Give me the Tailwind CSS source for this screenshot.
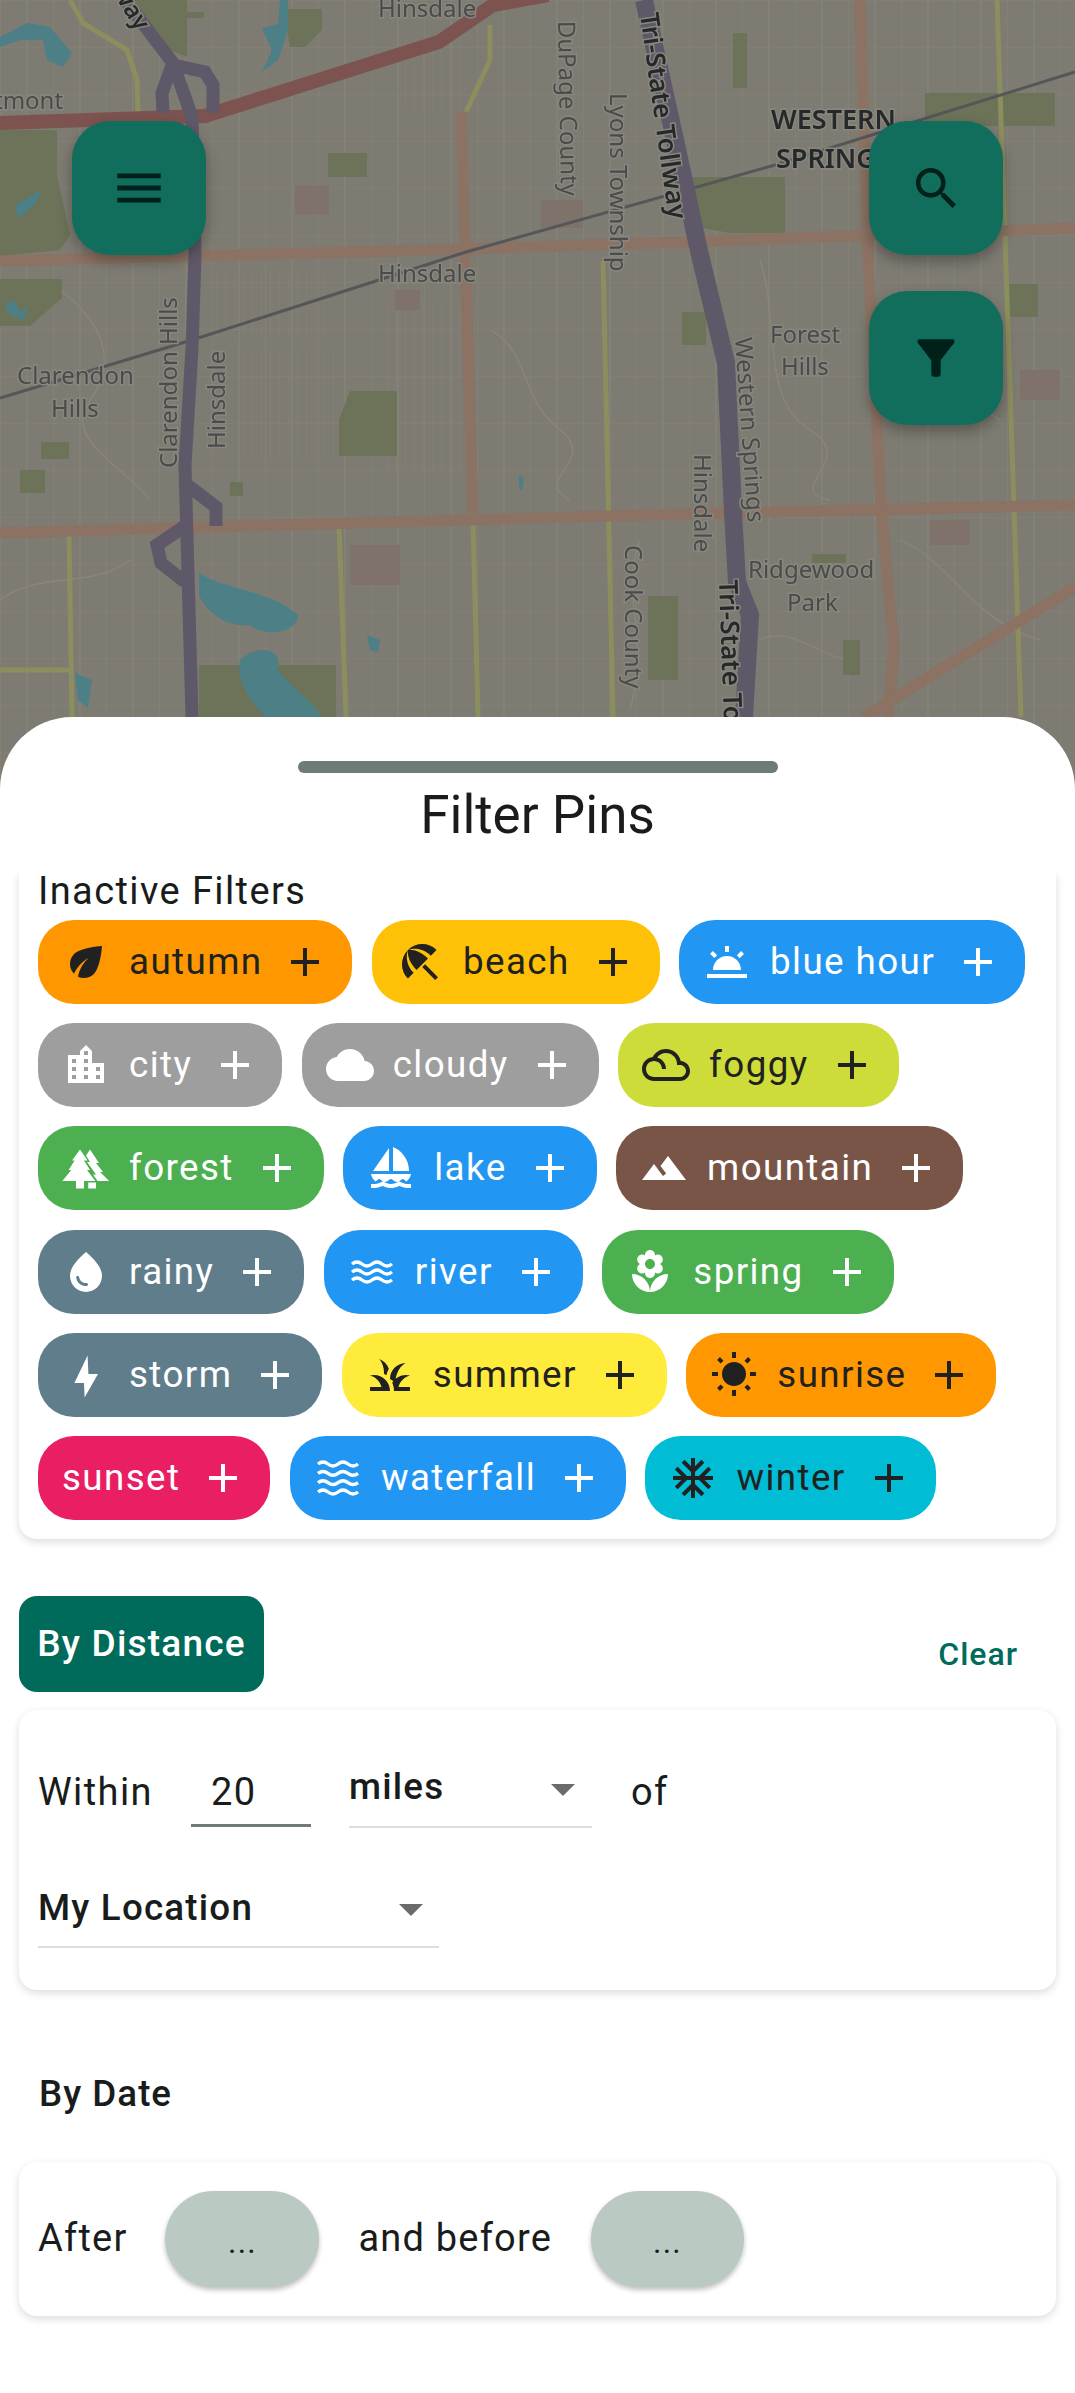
<!DOCTYPE html>
<html lang="en">
<head>
    <meta charset="UTF-8">
    <meta name="viewport" content="width=device-width, initial-scale=1.0">
    <title>Filter Pins</title>
    <script src="https://cdn.jsdelivr.net/npm/@tailwindcss/browser@4"></script>
</head>
<body class="bg-white">
<div class="relative w-[1075px] h-[2393px] overflow-hidden bg-white font-[Roboto,sans-serif] text-[#191c1b]">

    <!-- Map behind the scrim -->
    <div class="absolute inset-x-0 top-0 h-[800px] bg-[#7e7b72]">
        <svg class="blur-[0.7px]" width="1075" height="800" viewBox="0 0 1075 800" xmlns="http://www.w3.org/2000/svg">
            <defs>
                <pattern id="streets" width="53" height="47" patternUnits="userSpaceOnUse">
                    <path d="M0 0V47M0 0H53M27 0V47" stroke="#878477" stroke-width="1.2" fill="none"/>
                </pattern>
                <pattern id="blocks" width="9" height="60" patternUnits="userSpaceOnUse">
                    <path d="M0 0V60" stroke="#878477" stroke-width="1" fill="none"/>
                </pattern>
            </defs>
            <rect width="1075" height="800" fill="url(#streets)"/>
            <path d="M210 270H330V340H210zM240 350H340V460H240zM380 300H460V470H380zM400 40H460V110H400z" fill="url(#blocks)"/>
            <g fill="none" stroke="#8a8778" stroke-width="1.3">
                <path d="M60 290C100 320 120 360 90 400S130 470 150 500M490 330C530 350 520 400 560 430S530 480 570 500"/>
                <path d="M760 260C780 320 760 400 810 430S780 490 830 500M900 540C950 560 970 620 1040 640M640 540C620 590 650 640 630 710"/>
                <path d="M0 600C40 570 90 590 130 560M760 640C800 620 840 680 860 650M900 300C960 320 960 400 1000 420"/>
            </g>
            <!-- parks -->
            <g fill="#6c7358">
                <path d="M130 0H187V12H204V18H187V57L170 50 145 30z"/>
                <path d="M0 130H57V175L70 235 60 250 0 256z"/>
                <path d="M0 279H62V298L30 326H0z"/>
                <path d="M284 9H322V30L305 47H290z"/>
                <path d="M328 153H367V177H328zM692 177H785V233H730L692 226z"/>
                <path d="M925 93H1055V126H925zM1007 284H1038V317H1007zM682 312H706V345H682z"/>
                <path d="M41 442H69V459H41zM20 470H45V493H20zM230 482H243V496H230zM733 33H747V88H733z"/>
                <path d="M350 391H397V456H339V420z"/>
                <path d="M199 665H336V717H199z"/>
                <path d="M648 596H678V680H648zM843 640H860V675H843zM812 554H846V563H812z"/>
            </g>
            <!-- built up patches -->
            <g fill="#7e726a">
                <path d="M295 186H329V214H295zM541 200H583V228H541zM395 290H420V310H395zM350 545H400V585H350z"/>
                <path d="M930 520H970V545H930zM1020 370H1060V400H1020z"/>
            </g>
            <!-- water -->
            <g fill="#4c7f86">
                <path d="M0 37L27 23 50 27 72 53 63 67 47 60 43 40 20 40 0 47z"/>
                <path d="M262 28L278 24 280 0H288V30L278 60 262 72 272 50z"/>
                <path d="M15 205L42 190 35 205 18 218z"/>
                <path d="M5 305L14 300 20 312 28 305 24 320 10 315z"/>
                <path d="M199 573C225 590 270 590 298 615 298 630 270 640 250 625 225 628 205 610 199 595z"/>
                <path d="M240 660C260 642 285 650 277 670 295 690 312 700 322 717H265C250 700 235 680 240 660z"/>
                <path d="M75 673L92 680 88 708 78 700zM367 635L380 640 378 652 370 650zM519 475L524 478 522 491 519 488z"/>
            </g>
            <!-- minor roads, olive -->
            <g fill="none" stroke="#8c8e5e" stroke-width="5">
                <path d="M70 0L83 23 127 50 137 80 138 113"/>
                <path d="M490 25V60L466 112"/>
                <path d="M603 261L613 717M473 521L478 717M69 535L72 717M339 526L346 717"/>
                <path d="M997 0L1021 717M0 670H72"/>
            </g>
            <!-- arterial roads, tan -->
            <g fill="none" stroke="#8b7262" stroke-width="11">
                <path d="M0 261L466 249 685 242 1075 228"/>
                <path d="M0 533L240 526 685 514 1075 505"/>
                <path d="M461 112L473 517"/>
                <path d="M860 0L867 233 881 507 894 647 888 717"/>
                <path d="M1075 587L864 717"/>
            </g>
            <!-- rail -->
            <path d="M0 398L192 340 466 252 775 165 1075 72" fill="none" stroke="#55555a" stroke-width="3"/>
            <!-- red road -->
            <path d="M0 123L205 116 439 42 493 5 548 -5" fill="none" stroke="#7d5350" stroke-width="14"/>
            <!-- highways -->
            <g fill="none" stroke="#5f5869" stroke-width="13">
                <path d="M125 0L173 63 192 117 195 256 192 349 185 465 188 573 192 717"/>
                <path d="M173 63L162 93 163 113M178 66L205 72 213 85 213 113"/>
                <path d="M186 484L216 507V526M185 526L157 545 161 563 185 582"/>
            </g>
            <path d="M644 0L675 140 699 251 726 363 733 512 737 582 750 615 744 717" fill="none" stroke="#5f5869" stroke-width="18"/>
            <!-- labels -->
            <g font-family="Noto Sans" font-size="24" fill="#4a4b4a" stroke="#88877f" stroke-width="3" paint-order="stroke">
                <text x="378" y="17">Hinsdale</text>
                <text x="-6" y="109">tmont</text>
                <text x="378" y="282">Hinsdale</text>
                <text x="770" y="343">Forest</text>
                <text x="781" y="375">Hills</text>
                <text x="17" y="384">Clarendon</text>
                <text x="51" y="417">Hills</text>
                <text x="748" y="578">Ridgewood</text>
                <text x="787" y="611">Park</text>
                <text transform="translate(558 21) rotate(89)">DuPage County</text>
                <text transform="translate(610 93) rotate(90)">Lyons Township</text>
                <text transform="translate(177 468) rotate(-90)">Clarendon Hills</text>
                <text transform="translate(225 449) rotate(-90)">Hinsdale</text>
                <text transform="translate(735 338) rotate(86)">Western Springs</text>
                <text transform="translate(694 454) rotate(90)">Hinsdale</text>
                <text transform="translate(625 545) rotate(90)">Cook County</text>
            </g>
            <g font-family="Noto Sans" font-weight="600" fill="#26282a" stroke="#88877f" stroke-width="3" paint-order="stroke">
                <text x="771" y="129" font-size="27">WESTERN</text>
                <text x="776" y="168" font-size="27">SPRINGS</text>
                <text transform="translate(640 14) rotate(82)" font-size="26">Tri-State Tollway</text>
                <text transform="translate(719 580) rotate(88)" font-size="26">Tri-State Tollway</text>
                <text transform="translate(112 -8) rotate(58)" font-size="24">way</text>
            </g>
        </svg>

        <!-- Map action buttons -->
        <button class="absolute left-[72px] top-[121px] flex size-[134px] items-center justify-center rounded-[38px] bg-[#116e5c] text-[#00201a] shadow-[0_6px_14px_rgba(0,0,0,0.3)]">
            <svg class="size-[58px] fill-current" viewBox="0 0 24 24"><path d="M3 18h18v-2H3v2zm0-5h18v-2H3v2zm0-7v2h18V6H3z"/></svg>
        </button>
        <button class="absolute left-[869px] top-[121px] flex size-[134px] items-center justify-center rounded-[38px] bg-[#116e5c] text-[#00201a] shadow-[0_6px_14px_rgba(0,0,0,0.3)]">
            <svg class="size-[55px] fill-current" viewBox="0 0 24 24"><path d="M15.5 14h-.79l-.28-.27C15.41 12.59 16 11.11 16 9.5 16 5.91 13.09 3 9.5 3S3 5.91 3 9.5 5.91 16 9.5 16c1.61 0 3.09-.59 4.23-1.57l.27.28v.79l5 4.99L20.49 19l-4.99-5zm-6 0C7.01 14 5 11.99 5 9.5S7.01 5 9.5 5 14 7.01 14 9.5 11.99 14 9.5 14z"/></svg>
        </button>
        <button class="absolute left-[869px] top-[291px] flex size-[134px] items-center justify-center rounded-[38px] bg-[#116e5c] text-[#00201a] shadow-[0_6px_14px_rgba(0,0,0,0.3)]">
            <svg class="size-[56px] fill-current" viewBox="0 0 24 24"><path d="M4.25 5.61C6.27 8.2 10 13 10 13v6c0 .55.45 1 1 1h2c.55 0 1-.45 1-1v-6s3.72-4.8 5.74-7.39c.51-.66.04-1.61-.79-1.61H5.04c-.83 0-1.3.95-.79 1.61z"/></svg>
        </button>
    </div>

    <!-- Bottom sheet -->
    <div class="relative mt-[717px] h-[1676px] rounded-t-[72px] bg-white">
        <div class="flex flex-col items-center pt-[44px]">
            <div class="h-[12px] w-[480px] rounded-full bg-[#6f7b75]"></div>
            <h2 class="mt-[14px] h-[86px] text-[53px] leading-[56px] font-normal">Filter Pins</h2>
        </div>

        <!-- Scrolling list, top card is cut off by the header -->
        <div class="overflow-hidden px-[19px] h-[1520px]">
            <div class="rounded-b-[18px] bg-white px-[19px] pb-[19px] shadow-[0_3px_8px_rgba(0,0,0,0.14)]">
                <p class="h-[47px] text-[38px] leading-[36px] tracking-[1.4px]">Inactive Filters</p>
                <div class="flex flex-wrap gap-x-[19.5px] gap-y-[19.2px] text-[36.75px] tracking-[1.4px] leading-[44px]">
                    <div class="flex h-[84px] items-center gap-[19px] rounded-[36px] pl-[24px] pr-[23px] bg-[#ff9800] text-[#212121]">
                        <svg class="size-[48px] fill-current" viewBox="0 0 24 24"><path d="M6.05 8.05c-2.73 2.73-2.73 7.15-.02 9.88 1.47-3.4 4.09-6.24 7.36-7.93-2.77 2.34-4.71 5.61-5.39 9.32 2.6 1.23 5.8.78 7.95-1.37C19.43 14.47 20 4 20 4S9.53 4.57 6.05 8.05z"/></svg>
                        <span>autumn</span>
                        <svg class="size-[48px] fill-current" viewBox="0 0 24 24"><path d="M19 13h-6v6h-2v-6H5v-2h6V5h2v6h6v2z"/></svg>
                    </div>
                    <div class="flex h-[84px] items-center gap-[19px] rounded-[36px] pl-[24px] pr-[23px] bg-[#ffc107] text-[#212121]">
                        <svg class="size-[48px] fill-current" viewBox="0 0 24 24"><path d="M13.127 14.56l1.43-1.43 6.44 6.443L19.57 21zm4.293-5.73l2.86-2.86c-3.95-3.95-10.35-3.96-14.3-.02 3.93-1.3 8.31-.25 11.44 2.88zM5.95 5.98c-3.94 3.95-3.93 10.35.02 14.3l2.86-2.86C5.7 14.29 4.65 9.91 5.95 5.98zm.02-.02l-.01.01c-.38 3.01 1.17 6.88 4.3 10.02l5.73-5.73c-3.13-3.13-7.01-4.68-10.02-4.3z"/></svg>
                        <span>beach</span>
                        <svg class="size-[48px] fill-current" viewBox="0 0 24 24"><path d="M19 13h-6v6h-2v-6H5v-2h6V5h2v6h6v2z"/></svg>
                    </div>
                    <div class="flex h-[84px] items-center gap-[19px] rounded-[36px] pl-[24px] pr-[23px] bg-[#2196f3] text-white">
                        <svg class="size-[48px] fill-current" viewBox="0 0 24 24"><path d="M16.955 8.662l2.12-2.122 1.416 1.414-2.121 2.122zM2 18h20v2H2zm9-14h2v3h-2zM3.543 7.925L4.957 6.51l2.121 2.12-1.414 1.415zM5 16h14c0-3.87-3.13-7-7-7s-7 3.13-7 7z"/></svg>
                        <span>blue hour</span>
                        <svg class="size-[48px] fill-current" viewBox="0 0 24 24"><path d="M19 13h-6v6h-2v-6H5v-2h6V5h2v6h6v2z"/></svg>
                    </div>
                    <div class="flex h-[84px] items-center gap-[19px] rounded-[36px] pl-[24px] pr-[23px] bg-[#9e9e9e] text-white">
                        <svg class="size-[48px] fill-current" viewBox="0 0 24 24"><path d="M15 11V5l-3-3-3 3v2H3v14h18V11h-6zm-8 8H5v-2h2v2zm0-4H5v-2h2v2zm0-4H5V9h2v2zm6 8h-2v-2h2v2zm0-4h-2v-2h2v2zm0-4h-2V9h2v2zm0-4h-2V5h2v2zm6 12h-2v-2h2v2zm0-4h-2v-2h2v2z"/></svg>
                        <span>city</span>
                        <svg class="size-[48px] fill-current" viewBox="0 0 24 24"><path d="M19 13h-6v6h-2v-6H5v-2h6V5h2v6h6v2z"/></svg>
                    </div>
                    <div class="flex h-[84px] items-center gap-[19px] rounded-[36px] pl-[24px] pr-[23px] bg-[#9e9e9e] text-white">
                        <svg class="size-[48px] fill-current" viewBox="0 0 24 24"><path d="M19.35 10.04C18.67 6.59 15.64 4 12 4 9.11 4 6.6 5.64 5.35 8.04 2.34 8.36 0 10.91 0 14c0 3.31 2.69 6 6 6h13c2.76 0 5-2.24 5-5 0-2.64-2.05-4.78-4.65-4.96z"/></svg>
                        <span>cloudy</span>
                        <svg class="size-[48px] fill-current" viewBox="0 0 24 24"><path d="M19 13h-6v6h-2v-6H5v-2h6V5h2v6h6v2z"/></svg>
                    </div>
                    <div class="flex h-[84px] items-center gap-[19px] rounded-[36px] pl-[24px] pr-[23px] bg-[#cddc39] text-[#212121]">
                        <svg class="size-[48px] fill-current" viewBox="0 0 24 24"><path d="M19.35 10.04C18.67 6.59 15.64 4 12 4c-2.89 0-5.4 1.64-6.65 4.04C2.34 8.36 0 10.9 0 14c0 3.31 2.69 6 6 6h13c2.76 0 5-2.24 5-5 0-2.64-2.05-4.78-4.65-4.96zM19 18H6c-2.21 0-4-1.79-4-4s1.79-4 4-4 4 1.79 4 4h2c0-2.76-1.86-5.08-4.4-5.78C8.61 6.88 10.2 6 12 6c3.03 0 5.5 2.47 5.5 5.5v.5H19c1.65 0 3 1.35 3 3s-1.35 3-3 3z"/></svg>
                        <span>foggy</span>
                        <svg class="size-[48px] fill-current" viewBox="0 0 24 24"><path d="M19 13h-6v6h-2v-6H5v-2h6V5h2v6h6v2z"/></svg>
                    </div>
                    <div class="flex h-[84px] items-center gap-[19px] rounded-[36px] pl-[24px] pr-[23px] bg-[#4caf50] text-white">
                        <svg class="size-[48px] fill-current" viewBox="0 0 24 24"><path d="M9 2.700L12.800 8.300H11L14 13H12.500L16.700 18.500H11V22.300H7V18.500H.2L4.600 13H3.300L6.300 8.300H5zM14 2.700L18.500 9.500H17L20.500 14H19L23.600 18.500H17.800L15.500 15.200H17L12.500 9H14L12 5.700zM13.100 19.300H17V22.300H13.100z"/></svg>
                        <span>forest</span>
                        <svg class="size-[48px] fill-current" viewBox="0 0 24 24"><path d="M19 13h-6v6h-2v-6H5v-2h6V5h2v6h6v2z"/></svg>
                    </div>
                    <div class="flex h-[84px] items-center gap-[19px] rounded-[36px] pl-[24px] pr-[23px] bg-[#2196f3] text-white">
                        <svg class="size-[48px] fill-current" viewBox="0 0 24 24"><path d="M11 13.500V2L3 13.500h8zm10 0C21 7.500 17 3 13 1.500v12h8zM22 15H2c.31 1.530 1.160 2.840 2.330 3.730.7-.43 1.110-1.230 1.670-1.230 1 0 1.500 1.500 3 1.500s2-1.500 3-1.500 1.500 1.500 3 1.500 2-1.500 3-1.500c.56 0 .97.8 1.670 1.230C20.840 17.840 21.690 16.530 22 15zM22 20v2h-2c-1.400 0-2.500-.7-4-1-1.400.8-2.600 1-4 1s-2.600-.2-4-1c-1.500.3-2.600 1-4 1H2v-2h2c1.400 0 2.600-.7 4-1.200 1.400.8 2.600 1.200 4 1.200s2.600-.4 4-1.200c1.400.5 2.600 1.200 4 1.200z"/></svg>
                        <span>lake</span>
                        <svg class="size-[48px] fill-current" viewBox="0 0 24 24"><path d="M19 13h-6v6h-2v-6H5v-2h6V5h2v6h6v2z"/></svg>
                    </div>
                    <div class="flex h-[84px] items-center gap-[19px] rounded-[36px] pl-[24px] pr-[23px] bg-[#795548] text-white">
                        <svg class="size-[48px] fill-current" viewBox="0 0 24 24"><path d="M14 6l-3.75 5 2.85 3.8-1.6 1.2C9.81 13.75 7 10 7 10l-6 8h22L14 6z"/></svg>
                        <span>mountain</span>
                        <svg class="size-[48px] fill-current" viewBox="0 0 24 24"><path d="M19 13h-6v6h-2v-6H5v-2h6V5h2v6h6v2z"/></svg>
                    </div>
                    <div class="flex h-[84px] items-center gap-[19px] rounded-[36px] pl-[24px] pr-[23px] bg-[#607d8b] text-white">
                        <svg class="size-[48px] fill-current" viewBox="0 0 24 24"><path d="M12 2c-5.33 4.55-8 8.48-8 11.8 0 4.98 3.8 8.2 8 8.2s8-3.22 8-8.2c0-3.32-2.67-7.25-8-11.8zM7.83 14c.37 0 .67.26.74.62.41 2.22 2.28 2.98 3.64 2.87.43-.02.79.32.79.75 0 .4-.32.73-.72.75-2.13.13-4.62-1.09-5.19-4.12-.08-.45.28-.87.74-.87z"/></svg>
                        <span>rainy</span>
                        <svg class="size-[48px] fill-current" viewBox="0 0 24 24"><path d="M19 13h-6v6h-2v-6H5v-2h6V5h2v6h6v2z"/></svg>
                    </div>
                    <div class="flex h-[84px] items-center gap-[19px] rounded-[36px] pl-[24px] pr-[23px] bg-[#2196f3] text-white">
                        <svg class="size-[48px] fill-none stroke-current stroke-[1.7]" viewBox="0 0 24 24"><path d="M2 8c1.700-1.300 3.300-1.300 5 0s3.300 1.300 5 0 3.300-1.300 5 0 3.300 1.300 5 0M2 12c1.700-1.300 3.300-1.300 5 0s3.300 1.300 5 0 3.300-1.300 5 0 3.300 1.300 5 0M2 16c1.700-1.300 3.300-1.300 5 0s3.300 1.300 5 0 3.300-1.300 5 0 3.300 1.300 5 0"/></svg>
                        <span>river</span>
                        <svg class="size-[48px] fill-current" viewBox="0 0 24 24"><path d="M19 13h-6v6h-2v-6H5v-2h6V5h2v6h6v2z"/></svg>
                    </div>
                    <div class="flex h-[84px] items-center gap-[19px] rounded-[36px] pl-[24px] pr-[23px] bg-[#4caf50] text-white">
                        <svg class="size-[48px] fill-current" viewBox="0 0 24 24"><path d="M12 22c4.97 0 9-4.03 9-9-4.97 0-9 4.03-9 9zM5.600 10.250c0 1.380 1.120 2.500 2.500 2.500.53 0 1.010-.16 1.420-.44l-.02.19c0 1.380 1.120 2.500 2.500 2.500s2.500-1.120 2.500-2.500l-.02-.19c.4.28.89.44 1.420.44 1.380 0 2.500-1.120 2.500-2.500 0-1-.59-1.850-1.430-2.250.84-.4 1.430-1.250 1.430-2.250 0-1.380-1.120-2.500-2.500-2.500-.53 0-1.010.16-1.420.44l.02-.19C14.500 2.120 13.380 1 12 1S9.500 2.120 9.500 3.500l.02.19c-.4-.28-.89-.44-1.420-.44-1.380 0-2.500 1.120-2.500 2.500 0 1 .59 1.850 1.430 2.250-.84.4-1.430 1.250-1.430 2.250zM12 5.500c1.380 0 2.500 1.120 2.500 2.500s-1.120 2.500-2.500 2.500S9.500 9.380 9.500 8s1.120-2.500 2.500-2.500zM3 13c0 4.970 4.030 9 9 9 0-4.970-4.030-9-9-9z"/></svg>
                        <span>spring</span>
                        <svg class="size-[48px] fill-current" viewBox="0 0 24 24"><path d="M19 13h-6v6h-2v-6H5v-2h6V5h2v6h6v2z"/></svg>
                    </div>
                    <div class="flex h-[84px] items-center gap-[19px] rounded-[36px] pl-[24px] pr-[23px] bg-[#607d8b] text-white">
                        <svg class="size-[48px] fill-current" viewBox="0 0 24 24"><path d="M12.800 2.300L6.200 16H11L11.300 23.200 18 11.500H13.200z"/></svg>
                        <span>storm</span>
                        <svg class="size-[48px] fill-current" viewBox="0 0 24 24"><path d="M19 13h-6v6h-2v-6H5v-2h6V5h2v6h6v2z"/></svg>
                    </div>
                    <div class="flex h-[84px] items-center gap-[19px] rounded-[36px] pl-[24px] pr-[23px] bg-[#ffeb3b] text-[#212121]">
                        <svg class="size-[48px] fill-current" viewBox="0 0 24 24"><path d="M12,20H2v-2h5.75l0,0C7.02,15.19,4.81,12.99,2,12.26C2.64,12.1,3.31,12,4,12C8.42,12,12,15.58,12,20z M22,12.26 C21.36,12.1,20.69,12,20,12c-2.93,0-5.48,1.58-6.88,3.93c0.29,0.66,0.53,1.35,0.67,2.07c0.13,0.65,0.2,1.32,0.2,2h2h6v-2h-5.75 C16.98,15.19,19.19,12.99,22,12.26z M15.64,11.02c0.78-2.09,2.23-3.84,4.09-5C15.44,6.16,12,9.67,12,14c0,0.01,0,0.02,0,0.02 c0.95,0.54,1.83,1.2,2.56,2.02C14.68,14.21,15.07,12.5,15.64,11.02z M11.42,8.85C10.58,6.66,8.88,4.89,6.7,4C8.14,5.86,9,8.18,9,10.71c0,0.21-0.03,0.41-0.04,0.61c0.43,0.24,0.83,0.52,1.22,0.82C10.39,10.96,10.83,9.85,11.42,8.85z"/></svg>
                        <span>summer</span>
                        <svg class="size-[48px] fill-current" viewBox="0 0 24 24"><path d="M19 13h-6v6h-2v-6H5v-2h6V5h2v6h6v2z"/></svg>
                    </div>
                    <div class="flex h-[84px] items-center gap-[19px] rounded-[36px] pl-[24px] pr-[23px] bg-[#ff9800] text-[#212121]">
                        <svg class="size-[48px] fill-current" viewBox="0 0 24 24"><path d="M6.760 4.840l-1.800-1.790-1.410 1.410 1.790 1.790 1.420-1.410zM4 10.500H1v2h3v-2zm9-9.950h-2V3.500h2V.55zm7.450 3.910l-1.410-1.410-1.790 1.790 1.410 1.410 1.790-1.790zm-3.210 13.700l1.790 1.800 1.410-1.410-1.800-1.790-1.400 1.400zM20 10.500v2h3v-2h-3zm-8-5c-3.310 0-6 2.690-6 6s2.690 6 6 6 6-2.690 6-6-2.690-6-6-6zm-1 16.950h2V19.500h-2v2.950zm-7.450-3.910l1.410 1.410 1.790-1.800-1.410-1.410-1.790 1.800z"/></svg>
                        <span>sunrise</span>
                        <svg class="size-[48px] fill-current" viewBox="0 0 24 24"><path d="M19 13h-6v6h-2v-6H5v-2h6V5h2v6h6v2z"/></svg>
                    </div>
                    <div class="flex h-[84px] items-center gap-[19px] rounded-[36px] pl-[24px] pr-[23px] bg-[#e91e63] text-white">
                        <span>sunset</span>
                        <svg class="size-[48px] fill-current" viewBox="0 0 24 24"><path d="M19 13h-6v6h-2v-6H5v-2h6V5h2v6h6v2z"/></svg>
                    </div>
                    <div class="flex h-[84px] items-center gap-[19px] rounded-[36px] pl-[24px] pr-[23px] bg-[#2196f3] text-white">
                        <svg class="size-[48px] fill-none stroke-current stroke-[1.7]" viewBox="0 0 24 24"><path d="M2 5c1.700-1.300 3.300-1.300 5 0s3.300 1.300 5 0 3.300-1.300 5 0 3.300 1.300 5 0M2 9.670c1.700-1.300 3.300-1.300 5 0s3.300 1.300 5 0 3.300-1.300 5 0 3.300 1.300 5 0M2 14.330c1.700-1.300 3.300-1.300 5 0s3.300 1.300 5 0 3.300-1.300 5 0 3.300 1.300 5 0M2 19c1.700-1.300 3.300-1.300 5 0s3.300 1.300 5 0 3.300-1.300 5 0 3.300 1.300 5 0"/></svg>
                        <span>waterfall</span>
                        <svg class="size-[48px] fill-current" viewBox="0 0 24 24"><path d="M19 13h-6v6h-2v-6H5v-2h6V5h2v6h6v2z"/></svg>
                    </div>
                    <div class="flex h-[84px] items-center gap-[19px] rounded-[36px] pl-[24px] pr-[23px] bg-[#00bcd4] text-[#212121]">
                        <svg class="size-[48px] fill-current" viewBox="0 0 24 24"><path d="M22 11h-4.170l3.240-3.240-1.410-1.420L15 11h-2V9l4.660-4.660-1.420-1.410L13 6.170V2h-2v4.170L7.760 2.930 6.340 4.340 11 9v2H9L4.340 6.340 2.930 7.760 6.170 11H2v2h4.170l-3.240 3.240 1.410 1.420L9 13h2v2l-4.660 4.660 1.420 1.410L11 17.830V22h2v-4.170l3.240 3.240 1.420-1.410L13 15v-2h2l4.660 4.660 1.410-1.420L17.830 13H22z"/></svg>
                        <span>winter</span>
                        <svg class="size-[48px] fill-current" viewBox="0 0 24 24"><path d="M19 13h-6v6h-2v-6H5v-2h6V5h2v6h6v2z"/></svg>
                    </div>
                </div>
            </div>

            <!-- By Distance -->
            <div class="mt-[57px] flex items-start justify-between">
                <button class="h-[96px] w-[245px] rounded-[18px] bg-[#006b5a] text-[37px] tracking-[1.2px] font-medium text-white">By Distance</button>
                <span class="mr-[38px] mt-[36px] text-[32px] tracking-[1px] leading-[44px] font-medium text-[#006b5a]">Clear</span>
            </div>
            <div class="mt-[18px] h-[280px] rounded-[18px] bg-white px-[19px] pt-[52px] shadow-[0_3px_8px_rgba(0,0,0,0.14)] text-[38px] tracking-[1.4px]">
                <div class="flex h-[66px] items-start">
                    <span class="mt-[8px] leading-[44px]">Within</span>
                    <div class="ml-[38px] h-[65px] w-[120px] border-b-[3px] border-[#6f7b75] pl-[20px] pt-[8px] leading-[44px]">20</div>
                    <div class="relative ml-[38px] h-[66px] w-[243px] border-b-2 border-[#dcdcdc] pt-[3px] text-[36.75px] tracking-[1.2px] font-medium leading-[44px]">
                        miles
                        <svg class="absolute left-[202px] top-[22px] w-[24px] h-[12px] fill-[#6b6b6b]" viewBox="0 0 24 12"><path d="M0 0H24L12 12z"/></svg>
                    </div>
                    <span class="ml-[39px] mt-[8px] leading-[44px]">of</span>
                </div>
                <div class="relative mt-[54px] h-[66px] w-[401px] border-b-2 border-[#dcdcdc] pt-[4px] text-[36.75px] tracking-[1.2px] font-medium leading-[44px]">
                    My Location
                    <svg class="absolute left-[361px] top-[22px] w-[24px] h-[12px] fill-[#6b6b6b]" viewBox="0 0 24 12"><path d="M0 0H24L12 12z"/></svg>
                </div>
            </div>

            <!-- By Date -->
            <h3 class="mt-[82px] px-[20px] text-[36.75px] leading-[44px] font-medium tracking-[1px]">By Date</h3>
            <div class="mt-[46px] flex h-[154px] items-center rounded-[18px] bg-white px-[19px] text-[38px] tracking-[1.2px] shadow-[0_3px_8px_rgba(0,0,0,0.14)]">
                <span>After</span>
                <button class="ml-[38px] h-[96px] w-[154px] rounded-[48px] bg-[#bacac3] pt-[6px] text-[32px] shadow-[0_3px_5px_rgba(0,0,0,0.25)]">...</button>
                <span class="ml-[39px]">and before</span>
                <button class="ml-[39px] h-[96px] w-[153px] rounded-[48px] bg-[#bacac3] pt-[6px] text-[32px] shadow-[0_3px_5px_rgba(0,0,0,0.25)]">...</button>
            </div>
        </div>
    </div>
</div>
</body>
</html>
